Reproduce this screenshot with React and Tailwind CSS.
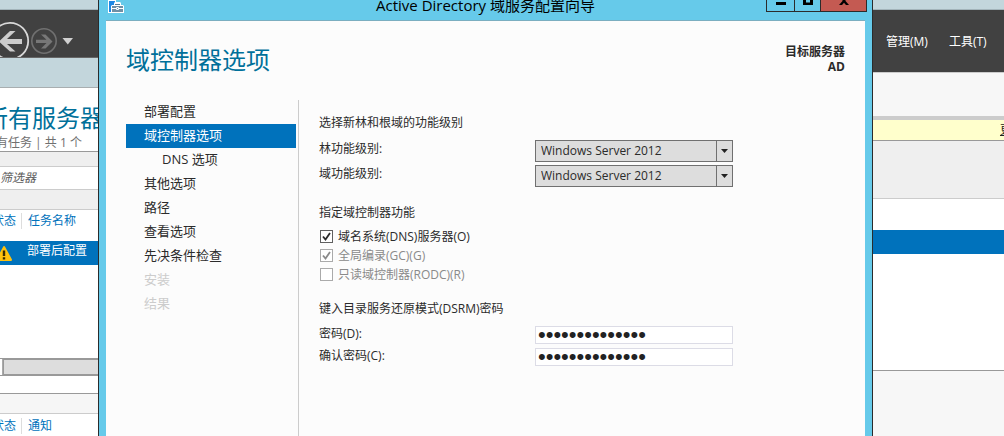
import React, { useState } from "react";

const steps = [
  { label: "部署配置" },
  { label: "域控制器选项", active: true },
  { label: "DNS 选项", nested: true },
  { label: "其他选项" },
  { label: "路径" },
  { label: "查看选项" },
  { label: "先决条件检查" },
  { label: "安装", disabled: true },
  { label: "结果", disabled: true },
];

function stepClass(step) {
  if (step.active) return "bg-[#0072bc] text-white";
  if (step.disabled) return "text-[#cccccc]";
  return "text-[#2b2b2b]";
}

function ServerPanel() {
  return (
    <aside className="flex w-[98px] shrink-0 flex-col overflow-hidden whitespace-nowrap bg-white text-xs">
      <div className="h-[10px] border-b border-[#a3b4ba] bg-[#c3d6dc]" />
      <nav aria-label="导航" className="h-12 overflow-hidden border-b border-[#666666] bg-[#414141]">
        <svg width="98" height="47" viewBox="0 10 98 47" fill="none" className="block">
          <circle cx="10" cy="41" r="18.200" stroke="#d8d8d8" strokeWidth="1.800" />
          <path d="M-1 41.500 10 31H15.500L7 39H22V44H7L15.500 51.500H10Z" fill="#cccccc" />
          <circle cx="44" cy="41" r="12.200" stroke="#707070" strokeWidth="1.600" />
          <path d="M52.500 41.500 45.500 34.500H41L46.500 39.800H36V43H46.500L41 48.500H45.500Z" fill="#777777" />
          <path d="M62.500 38H73L67.800 44.500Z" fill="#d0d0d0" />
        </svg>
      </nav>
      <div className="h-[30px] border-b border-[#a8aeb0] bg-[#c3d6dc]" />
      <header className="-ml-4 h-16 border-b border-[#999999] pt-3">
        <h2 className="text-2xl leading-9 text-[#00709a]">所有服务器</h2>
        <p className="leading-[14px] text-[#707070]">所有任务 | 共 1 个</p>
      </header>
      <div className="bg-[#efefef] pt-[14px] pb-[19px]">
        <input
          aria-label="筛选器"
          placeholder="筛选器"
          className="block h-6 w-full border-y border-[#cccccc] bg-white pb-[2px] text-xs italic outline-none placeholder:text-[#5c5c5c]"
        />
      </div>
      <table className="-ml-2 w-[106px] table-fixed border-separate border-spacing-0 text-left">
        <thead>
          <tr className="h-8 text-[#0072bc]">
            <th className="w-[30px] border-t border-[#cccccc] p-0 pb-[10px] align-middle font-normal">
              <span className="block border-r border-[#dddddd]">状态</span>
            </th>
            <th className="border-t border-[#cccccc] p-0 pb-[10px] pl-[6px] font-normal">任务名称</th>
          </tr>
        </thead>
        <tbody>
          <tr className="h-6 bg-[#0072bc] text-white">
            <td className="p-0">
              <svg width="20" height="20" viewBox="0 0 20 20" className="block">
                <path d="M12 3Q12.800 3 13.200 4L20 16.500Q20 18 19 18H4V17L11 4Q11.400 3 12 3Z" fill="#ffc20e" />
                <path d="M10.800 7.500H13.200V13H10.800ZM10.800 14.200H13.200V16.500H10.800Z" fill="#3a2c00" />
              </svg>
            </td>
            <td className="p-0 pb-1 pl-[5px]">部署后配置</td>
          </tr>
        </tbody>
      </table>
      <div className="mt-[93px] flex h-[18px] border-t border-b border-[#999999] bg-white">
        <div className="w-[3px] border-r border-[#aaaaaa]" />
        <div className="flex-1 border border-r-0 border-[#999999] bg-[#dddddd]" />
      </div>
      <div className="mt-[17px] h-[21px] border-t border-b border-t-[#999999] border-b-[#cccccc] bg-[#f6f6f6]" />
      <div className="-ml-2 flex h-[22px] items-center pt-[2px] text-[#0072bc]">
        <span className="w-[30px] border-r border-[#dddddd]">状态</span>
        <span className="ml-[6px]">通知</span>
      </div>
    </aside>
  );
}

function MenuPanel() {
  return (
    <aside className="flex w-[131px] shrink-0 flex-col overflow-hidden whitespace-nowrap bg-white text-xs">
      <div className="h-[10px] border-b border-[#a3b4ba] bg-[#c3d6dc]" />
      <nav className="flex h-[62px] items-center gap-[21px] bg-[#414141] pt-[2px] pl-[13px] text-white">
        <button className="shrink-0">管理(M)</button>
        <button className="shrink-0">工具(T)</button>
      </nav>
      <div className="h-11 border-t border-[#cccccc] bg-[#f7f7f7]" />
      <div className="h-1 bg-[#cccccc]" />
      <div className="flex h-[21px] items-center justify-end overflow-hidden border-b border-[#999999] bg-[#ffffcc]">
        <a href="#more" className="-mr-2 text-[#222222] underline">更</a>
      </div>
      <div className="h-[58px] border-b border-[#cccccc] bg-[#efefef]" />
      <div className="mt-[31px] h-6 bg-[#0072bc]" />
      <div className="mt-[116px] flex-1 border-t border-[#999999] bg-[#f7f7f7]" />
    </aside>
  );
}

function LevelSelect({ id, label }) {
  return (
    <div className="flex h-[22px] items-center">
      <label htmlFor={id} className="w-[216px] pb-1">{label}</label>
      <div className="relative w-[198px]">
        <select
          id={id}
          className="block h-[22px] w-full appearance-none border border-[#707070] bg-[#dddddd] pl-[5px] text-xs text-[#2b2b2b]"
        >
          <option>Windows Server 2012</option>
        </select>
        <span className="pointer-events-none absolute inset-y-0 right-0 flex w-[17px] items-center border-l border-[#707070] pl-1">
          <svg width="7" height="4" viewBox="0 0 7 4"><path d="M0 0H7L3.500 4Z" fill="#222222" /></svg>
        </span>
      </div>
    </div>
  );
}

function Option({ label, checked, disabled }) {
  const [on, setOn] = useState(Boolean(checked));
  return (
    <label className={disabled ? "flex h-[19px] items-center gap-[5px] text-[#8a8a8a]" : "flex h-[19px] items-center gap-[5px]"}>
      <span className="relative ml-px size-[13px]">
        <input
          type="checkbox"
          checked={on}
          disabled={disabled}
          onChange={() => setOn(!on)}
          className="block size-[13px] appearance-none border border-[#606060] bg-white disabled:border-[#aaaaaa]"
        />
        {on && (
          <svg width="13" height="13" viewBox="0 0 13 13" className="pointer-events-none absolute inset-0">
            <path d="M3 6.500 5.500 9.500 10 3" fill="none" stroke="currentColor" strokeWidth="1.800" />
          </svg>
        )}
      </span>
      <span className="leading-[16px]">{label}</span>
    </label>
  );
}

function PasswordRow({ id, label }) {
  return (
    <div className="flex h-[22px] items-center">
      <label htmlFor={id} className="w-[216px] pb-[2px]">{label}</label>
      <input
        id={id}
        type="password"
        defaultValue="Passw0rd123456"
        className="h-[18px] w-[198px] border border-[#dcdce6] bg-white px-[2px] font-['Liberation_Sans',sans-serif] text-[22px] leading-4 text-[#222222] outline-none"
      />
    </div>
  );
}

function Wizard() {
  return (
    <main className="flex min-w-0 flex-1 flex-col border-x border-[#2b2b2b] bg-[#66caea] px-[7px]">
      <header className="relative flex h-5 items-start justify-center">
        <svg width="18" height="14" viewBox="0 0 18 14" className="absolute top-0 left-[2px]">
          <path d="M0 0H8V13H0Z" fill="#ffffff" />
          <path d="M1 0H7V12H1Z" fill="#1e88e5" />
          <path d="M1 0.500H7" stroke="#ffffff" />
          <path d="M3 12V6L4 5H6V3L7 2H12L13 3V5H15L16 6V13H3Z" fill="#ffffff" />
          <path d="M4 6H15V12H4Z" fill="#6f8fa5" />
          <path d="M7 5H12V4H7Z" fill="#5d7d94" />
          <path d="M4 8.500H8M11 8.500H15M8.500 7.500V9.500H10.500V7.500Z" stroke="#ffffff" fill="none" />
        </svg>
        <h1 className="-mt-[5px] text-[15px] leading-5 text-black">Active Directory 域服务配置向导</h1>
        <div className="absolute top-0 right-[-2px] flex h-3 border border-t-0 border-[#2b2b2b]">
          <button aria-label="最小化" className="flex w-7 justify-center border-r border-[#2b2b2b]">
            <svg width="10" height="5"><path d="M0 2H10V5H0Z" fill="#000" /></svg>
          </button>
          <button aria-label="最大化" className="flex w-[26px] justify-center border-r border-[#2b2b2b]">
            <svg width="10" height="5"><path d="M0 0V5H10V0H7V2.500H3V0Z" fill="#000" /></svg>
          </button>
          <button aria-label="关闭" className="flex w-[45px] justify-center bg-[#c45a52]">
            <svg width="10" height="5"><path d="M0 5 3.500 1V0H6.500V1L10 5H7L5 2.800 3 5Z" fill="#000" /></svg>
          </button>
        </div>
      </header>
      <section className="flex flex-1 flex-col border-t border-[#7baec0] bg-[#fcfcfc] pl-5">
        <div className="flex h-[79px] justify-between pr-5">
          <h2 className="pt-[21px] text-2xl leading-9 text-[#00709a]">域控制器选项</h2>
          <p className="pt-[23px] text-right text-xs leading-[15px] font-semibold text-[#2b2b2b]">
            目标服务器<br /><span className="font-bold">AD</span>
          </p>
        </div>
        <div className="flex flex-1">
          <ul className="w-[173px] shrink-0 border-r border-[#cccccc] pr-[2px]">
            {steps.map((step) => (
              <li key={step.label} className={stepClass(step)}>
                <button
                  disabled={step.disabled}
                  className={step.nested ? "block h-6 w-full pl-9 text-left text-[13px]" : "block h-6 w-full pl-[18px] text-left text-[13px]"}
                >
                  {step.label}
                </button>
              </li>
            ))}
          </ul>
          <form className="flex-1 pt-[13px] pl-5 text-xs text-[#2b2b2b]">
            <h3 className="h-[27px] leading-5">选择新林和根域的功能级别</h3>
            <div className="flex flex-col gap-[3px]">
              <LevelSelect id="forest" label="林功能级别:" />
              <LevelSelect id="domain" label="域功能级别:" />
            </div>
            <h3 className="mt-4 h-6 leading-5">指定域控制器功能</h3>
            <Option label="域名系统(DNS)服务器(O)" checked />
            <Option label="全局编录(GC)(G)" checked disabled />
            <Option label="只读域控制器(RODC)(R)" disabled />
            <h3 className="mt-[15px] h-[25px] leading-5">键入目录服务还原模式(DSRM)密码</h3>
            <PasswordRow id="password" label="密码(D):" />
            <PasswordRow id="confirm" label="确认密码(C):" />
          </form>
        </div>
      </section>
    </main>
  );
}

export default function App() {
  return (
    <div className="flex min-h-screen overflow-hidden bg-white font-['Open_Sans','Noto_Sans_CJK_SC',sans-serif]">
      <ServerPanel />
      <Wizard />
      <MenuPanel />
    </div>
  );
}
